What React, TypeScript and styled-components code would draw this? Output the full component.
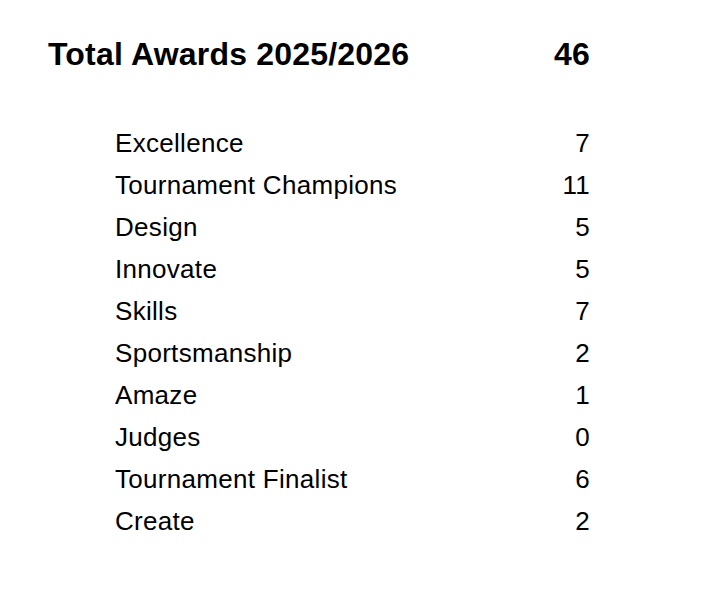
import React from 'react';
import styled, { createGlobalStyle } from 'styled-components';

const GlobalStyle = createGlobalStyle`
  html, body {
    margin: 0;
    padding: 0;
    background: #ffffff;
  }
  body {
    font-family: "Liberation Sans", Arial, sans-serif;
    color: #000000;
  }
`;

type Award = {
  name: string;
  count: number;
};

const awards: Award[] = [
  { name: 'Excellence', count: 7 },
  { name: 'Tournament Champions', count: 11 },
  { name: 'Design', count: 5 },
  { name: 'Innovate', count: 5 },
  { name: 'Skills', count: 7 },
  { name: 'Sportsmanship', count: 2 },
  { name: 'Amaze', count: 1 },
  { name: 'Judges', count: 0 },
  { name: 'Tournament Finalist', count: 6 },
  { name: 'Create', count: 2 },
];

const Page = styled.div`
  width: 542px;
  padding: 36px 0 0 48px;
`;

const Header = styled.div`
  display: flex;
  justify-content: space-between;
  align-items: center;
  height: 36px;
  line-height: 36px;
  font-size: 32px;
  font-weight: bold;
  letter-spacing: 0.2px;
`;

const List = styled.div`
  margin-top: 50px;
  margin-left: 67px;
  display: flex;
  flex-direction: column;
`;

const Row = styled.div`
  display: flex;
  justify-content: space-between;
  align-items: center;
  height: 42px;
  line-height: 42px;
  font-size: 26px;
  letter-spacing: 0.3px;
`;

export default function App() {
  const total = awards.reduce((sum, a) => sum + a.count, 0);
  return (
    <>
      <GlobalStyle />
      <Page>
        <Header>
          <span>Total Awards 2025/2026</span>
          <span>{total}</span>
        </Header>
        <List>
          {awards.map((a) => (
            <Row key={a.name}>
              <span>{a.name}</span>
              <span>{a.count}</span>
            </Row>
          ))}
        </List>
      </Page>
    </>
  );
}
